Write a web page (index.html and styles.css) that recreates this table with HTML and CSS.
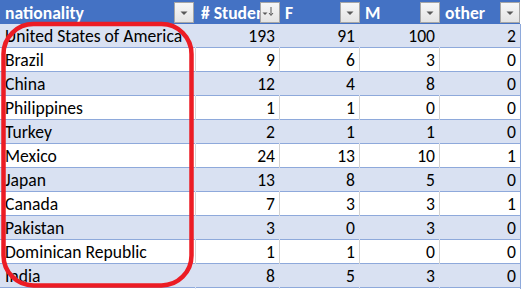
FILE: index.html
```html
<!DOCTYPE html>
<html>
<head>
<meta charset="utf-8">
<link rel="stylesheet" href="styles.css">
</head>
<body>
<div class="sheet">
  <div class="row head">
    <div class="cell">nationality<span class="dd"><svg width="20" height="21" viewBox="0 0 20 21"><path d="M6.5 9.5h7l-3.5 3.5z" fill="#595959"/></svg></span></div>
    <div class="cell">#&nbsp;Students<span class="dd"><svg width="20" height="21" viewBox="0 0 20 21"><path d="M2.5 10.5h5l-2.5 2.5z" fill="#595959"/><path d="M11 5v8M9 11l2 2.5 2-2.5" fill="none" stroke="#595959" stroke-width="1"/></svg></span></div>
    <div class="cell">F<span class="dd"><svg width="20" height="21" viewBox="0 0 20 21"><path d="M6.5 9.5h7l-3.5 3.5z" fill="#595959"/></svg></span></div>
    <div class="cell">M<span class="dd"><svg width="20" height="21" viewBox="0 0 20 21"><path d="M6.5 9.5h7l-3.5 3.5z" fill="#595959"/></svg></span></div>
    <div class="cell">other<span class="dd"><svg width="20" height="21" viewBox="0 0 20 21"><path d="M6.5 9.5h7l-3.5 3.5z" fill="#595959"/></svg></span></div>
  </div>
  <div class="row band"><div class="cell">United States of America</div><div class="cell num">193</div><div class="cell num">91</div><div class="cell num">100</div><div class="cell num">2</div></div>
  <div class="row"><div class="cell">Brazil</div><div class="cell num">9</div><div class="cell num">6</div><div class="cell num">3</div><div class="cell num">0</div></div>
  <div class="row band"><div class="cell">China</div><div class="cell num">12</div><div class="cell num">4</div><div class="cell num">8</div><div class="cell num">0</div></div>
  <div class="row"><div class="cell">Philippines</div><div class="cell num">1</div><div class="cell num">1</div><div class="cell num">0</div><div class="cell num">0</div></div>
  <div class="row band"><div class="cell">Turkey</div><div class="cell num">2</div><div class="cell num">1</div><div class="cell num">1</div><div class="cell num">0</div></div>
  <div class="row"><div class="cell">Mexico</div><div class="cell num">24</div><div class="cell num">13</div><div class="cell num">10</div><div class="cell num">1</div></div>
  <div class="row band"><div class="cell">Japan</div><div class="cell num">13</div><div class="cell num">8</div><div class="cell num">5</div><div class="cell num">0</div></div>
  <div class="row"><div class="cell">Canada</div><div class="cell num">7</div><div class="cell num">3</div><div class="cell num">3</div><div class="cell num">1</div></div>
  <div class="row band"><div class="cell">Pakistan</div><div class="cell num">3</div><div class="cell num">0</div><div class="cell num">3</div><div class="cell num">0</div></div>
  <div class="row"><div class="cell">Dominican Republic</div><div class="cell num">1</div><div class="cell num">1</div><div class="cell num">0</div><div class="cell num">0</div></div>
  <div class="row band"><div class="cell">India</div><div class="cell num">8</div><div class="cell num">5</div><div class="cell num">3</div><div class="cell num">0</div></div>
  <svg class="mark" width="521" height="289" viewBox="0 0 521 289"><rect x="3.5" y="24" width="188" height="261.5" rx="30" ry="30" fill="none" stroke="#EC1C24" stroke-width="4.5"/></svg>
</div>
</body>
</html>
```

FILE: styles.css
```css
html, body {
  margin: 0;
  padding: 0;
  background: #ffffff;
}
.sheet {
  position: relative;
  width: 521px;
  height: 289px;
  overflow: hidden;
  font-family: "Carlito", "Calibri", "Liberation Sans", Arial, sans-serif;
  font-size: 17.6px;
  color: #000;
}
.row {
  display: grid;
  grid-template-columns: 196px 84px 80px 80px 81px;
  height: 24px;
  box-sizing: border-box;
  border-bottom: 1px solid #8EA9DB;
  background: #ffffff;
}
.row.band {
  background: #D9E1F2;
}
.cell {
  box-sizing: border-box;
  border-right: 1px solid #D4D4D4;
  padding: 0 5px;
  line-height: 25px;
  white-space: nowrap;
  overflow: visible;
  position: relative;
}
.row.band .cell {
  border-right-color: #D9E1F2;
}
.row .cell:last-child {
  border-right-color: #8EA9DB;
}
.num {
  text-align: right;
  padding-right: 4px;
}
.row.head {
  background: #4472C4;
  border-bottom: none;
  color: #ffffff;
  font-weight: bold;
}
.row.head .cell {
  border-right: none;
  overflow: hidden;
  line-height: 26px;
}
.row.head .cell:last-child {
  border-right: 1px solid #ffffff;
}
.dd {
  position: absolute;
  top: 2px;
  right: 0;
  width: 20px;
  height: 21px;
  box-sizing: border-box;
  border: 1px solid #A6A6A6;
  background: linear-gradient(#F7F7F7, #E4E4E4);
}
.dd svg {
  position: absolute;
  left: -1px;
  top: -1px;
  display: block;
}
.row.head .cell:first-child .dd {
  right: 2px;
}
.mark {
  position: absolute;
  left: 0;
  top: 0;
  pointer-events: none;
}
```
